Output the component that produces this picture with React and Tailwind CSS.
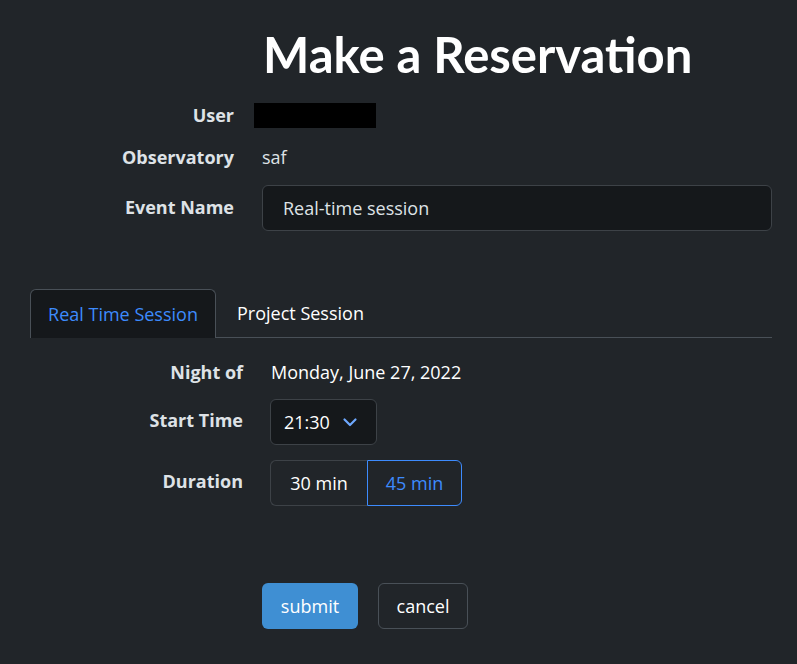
import React from "react";

function Label({ children, w }) {
  return (
    <div className={`${w} shrink-0 text-right pr-3 font-bold text-[18px] text-[#dee2e6]`}>{children}</div>
  );
}

export default function App() {
  return (
    <div className="min-h-screen w-full bg-[#212529] text-[#dee2e6] font-['Open_Sans',sans-serif] text-[18px]">
      <div className="pl-[30px] pr-[25px] pt-[24px] pb-[34px]">
        <h1 className="pl-[233px] font-['Lato',sans-serif] text-[49px] font-bold leading-[60px] text-white">Make a Reservation</h1>
        <div className="mt-[18px] flex items-center h-[27px]">
          <Label w="w-[216px]">User</Label>
          <div className="ml-[8px] w-[122px] h-[25px] bg-black"></div>
        </div>
        <div className="mt-[15px] flex items-center h-[27px]">
          <Label w="w-[216px]">Observatory</Label>
          <div className="ml-[16px]">saf</div>
        </div>
        <div className="mt-[14px] flex items-start">
          <Label w="w-[216px]"><div className="pt-[9px]">Event Name</div></Label>
          <div className="ml-[16px] flex-1 h-[46px] rounded-[6px] border border-[#3d4247] bg-[#15181b] flex items-center px-[20px] text-[#dee2e6]">Real-time session</div>
        </div>

        <div className="mt-[58px] flex border-b border-[#495057] h-[49px]">
          <div className="-mb-px w-[186px] rounded-t-[6px] border border-[#495057] border-b-0 bg-[#15181b] flex items-center justify-center text-[#3d8bfd]">Real Time Session</div>
          <div className="px-[21px] flex items-center text-white">Project Session</div>
        </div>

        <div className="mt-[21px] flex items-center h-[27px]">
          <Label w="w-[225px]">Night of</Label>
          <div className="ml-[16px] text-white">Monday, June 27, 2022</div>
        </div>
        <div className="mt-[13px] flex items-center">
          <Label w="w-[225px]"><div className="-mt-[4px]">Start Time</div></Label>
          <div className="ml-[15px] w-[107px] h-[46px] rounded-[6px] border border-[#3d4247] bg-[#15181b] flex items-center pl-[13px] gap-[12px] text-white">
            <span>21:30</span>
            <svg width="16" height="16" viewBox="0 0 16 16" fill="none" stroke="#6ea8fe" strokeWidth="2.2" strokeLinecap="round" strokeLinejoin="round"><path d="M2.5 5.5 8 11l5.5-5.5" /></svg>
          </div>
        </div>
        <div className="mt-[15px] flex items-center">
          <Label w="w-[225px]"><div className="-mt-[4px]">Duration</div></Label>
          <div className="ml-[15px] flex h-[46px]">
            <div className="w-[97px] rounded-l-[6px] border border-[#3d4247] border-r-0 flex items-center justify-center text-white">30 min</div>
            <div className="w-[95px] rounded-r-[6px] border border-[#3d8bfd] flex items-center justify-center text-[#3d8bfd]">45 min</div>
          </div>
        </div>

        <div className="mt-[77px] flex pl-[232px] gap-[20px]">
          <button className="w-[96px] h-[46px] rounded-[6px] bg-[#3f8fd3] text-white">submit</button>
          <button className="w-[90px] h-[46px] rounded-[6px] border border-[#495057] text-white">cancel</button>
        </div>
      </div>
    </div>
  );
}
